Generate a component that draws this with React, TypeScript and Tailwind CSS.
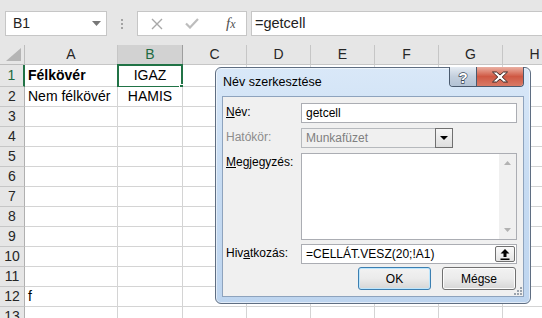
import React from 'react';

const COLS = ['A', 'B', 'C', 'D', 'E', 'F', 'G', 'H'];
const ROWS = [1, 2, 3, 4, 5, 6, 7, 8, 9, 10, 11, 12, 13];

const cellText: Record<string, { text: string; bold?: boolean; center?: boolean }> = {
  A1: { text: 'Félkövér', bold: true },
  B1: { text: 'IGAZ', center: true },
  A2: { text: 'Nem félkövér' },
  B2: { text: 'HAMIS', center: true },
  A12: { text: 'f' },
};

const FormulaBar = () => (
  <div className="flex h-[45px] items-start bg-[#e6e6e6] pl-[5px] pt-[11px]">
    <div className="flex h-[25px] w-[102px] items-center justify-between border border-[#c6c6c6] bg-white pl-[7px] pr-[5px] text-[14px] text-[#222]">
      <span>B1</span>
      <svg width="9" height="5" viewBox="0 0 9 5">
        <path d="M0 0h9L4.5 5z" fill="#777" />
      </svg>
    </div>
    <div className="flex h-[25px] w-[30px] flex-col items-center justify-center gap-[2px]">
      <div className="h-[2px] w-[2px] bg-[#a3a3a3]" />
      <div className="h-[2px] w-[2px] bg-[#a3a3a3]" />
      <div className="h-[2px] w-[2px] bg-[#a3a3a3]" />
    </div>
    <div className="flex h-[25px] w-[110px] items-center border border-[#c6c6c6] bg-white">
      <svg className="ml-[13px]" width="12" height="12" viewBox="0 0 12 12">
        <path d="M1 1l10 10M11 1L1 11" stroke="#a8a8a8" strokeWidth="1.4" fill="none" />
      </svg>
      <svg className="ml-[22px]" width="14" height="11" viewBox="0 0 14 11">
        <path d="M1 5.5l4 4L13 1" stroke="#bdbdbd" strokeWidth="2.2" fill="none" />
      </svg>
      <span className="ml-[27px] font-['Liberation_Serif',serif] text-[15px] italic text-[#505050]">
        f<span className="text-[12px]">x</span>
      </span>
    </div>
    <div className="ml-[4px] flex h-[25px] flex-1 items-center border border-r-0 border-[#c6c6c6] bg-white pl-[3px] text-[14.5px] text-[#222]">
      =getcell
    </div>
  </div>
);

const Grid = () => (
  <div className="grid grid-cols-[25px_93px_65px_64px_64px_64px_64px_64px_64px] grid-rows-[20px_22px_repeat(12,20px)] text-[14px]">
    <div className="relative border-b border-r border-[#bdbdbd] bg-[#e6e6e6]">
      <svg className="absolute bottom-[3px] right-[3px]" width="15" height="13" viewBox="0 0 15 13">
        <path d="M15 0v13H0z" fill="#b5b5b5" />
      </svg>
    </div>
    {COLS.map((c) => (
      <div
        key={c}
        className={`flex items-center justify-center border-b border-r ${
          c === 'B'
            ? 'border-[#9e9e9e] bg-[#d2d2d2] text-[#1e6b41]'
            : 'border-[#c6c6c6] bg-[#e6e6e6] text-[#262626]'
        }`}
      >
        {c}
      </div>
    ))}
    {ROWS.map((r) => (
      <React.Fragment key={r}>
        <div
          className={`flex items-center justify-center border-b bg-[#e6e6e6] ${
            r === 1
              ? 'border-r-2 border-b-[#c6c6c6] border-r-[#217346] text-[#1e6b41]'
              : 'border-r border-[#c6c6c6] border-r-[#b0b0b0] text-[#262626]'
          }`}
        >
          {r}
        </div>
        {COLS.map((c) => {
          const key = `${c}${r}`;
          const cell = cellText[key];
          return (
            <div
              key={key}
              className={`relative flex items-center border-b border-r border-[#d4d4d4] bg-white px-[3px] text-black ${
                cell?.center ? 'justify-center' : ''
              } ${cell?.bold ? 'font-bold' : ''}`}
            >
              {cell?.text}
              {key === 'B1' && (
                <div className="pointer-events-none absolute -left-[1px] -top-[1px] h-[24px] w-[66px] border-2 border-[#217346]">
                  <div className="absolute -bottom-[4px] -right-[4px] h-[6px] w-[6px] border border-white bg-[#217346]" />
                </div>
              )}
            </div>
          );
        })}
      </React.Fragment>
    ))}
  </div>
);

const Label = ({ children, disabled }: { children: React.ReactNode; disabled?: boolean }) => (
  <div className={`w-[75px] shrink-0 leading-[18px] ${disabled ? 'text-[#8c8c8c]' : 'text-black'}`}>{children}</div>
);

const NameDialog = () => (
  <div className="absolute left-[215px] top-[67px] h-[237px] w-[316px] rounded-[6px] border border-[#5f6e82] bg-gradient-to-b from-[#d9e8f8] via-[#c6dbf2] to-[#bed5ef] px-[6px] shadow-[inset_0_0_0_1px_rgba(255,255,255,0.55)]">
    <div className="flex h-[28px] items-center pl-[1px] text-[12.5px] text-black">Név szerkesztése</div>

    <div className="absolute -top-[1px] right-[6px] flex h-[20px] overflow-hidden rounded-b-[4px] border border-t-0 border-[#4a5a6e]">
      <div className="flex w-[27px] items-center justify-center border-r border-[#4a5a6e] bg-gradient-to-b from-[#e6ecf3] via-[#c3cfdd] to-[#b3c2d4]">
        <svg width="12" height="16" viewBox="0 0 12 16">
          <text
            x="6"
            y="13.5"
            textAnchor="middle"
            fontFamily="Liberation Sans, Arial, sans-serif"
            fontWeight="bold"
            fontSize="15"
            fill="#fff"
            stroke="#3a4654"
            strokeWidth="1.3"
            paintOrder="stroke"
          >
            ?
          </text>
        </svg>
      </div>
      <div className="flex w-[46px] items-center justify-center bg-gradient-to-b from-[#eab0a3] via-[#cf5843] to-[#d87a66]">
        <svg width="18" height="12" viewBox="0 0 18 12">
          <path
            d="M1.5 1h4l3.5 3 3.5-3h4l-5.3 5 5.3 5h-4L9 8 5.5 11h-4l5.3-5z"
            fill="#fff"
            stroke="#3b2a28"
            strokeWidth="1"
            strokeLinejoin="round"
          />
        </svg>
      </div>
    </div>

    <div className="relative flex h-[201px] flex-col border border-[#8ea3bd] bg-[#f0f0f0] pl-[3px] pr-[6px] pt-[6px] text-[12px]">
      <div className="flex">
        <Label>
          <span className="underline">N</span>év:
        </Label>
        <div className="flex h-[20px] w-[216px] items-center border border-[#abadb3] bg-white pl-[4px] text-black">
          getcell
        </div>
      </div>

      <div className="mt-[5px] flex">
        <Label disabled>Hatókör:</Label>
        <div className="flex h-[20px] w-[152px] items-center border border-[#b6b9bd] bg-[#f0f0f0]">
          <span className="flex-1 pl-[4px] text-[#7f7f7f]">Munkafüzet</span>
          <div className="-mr-[1px] -my-[1px] flex h-[20px] w-[18px] items-center justify-center border border-[#707070] bg-gradient-to-b from-[#f6f6f6] to-[#dedede]">
            <svg width="8" height="4" viewBox="0 0 8 4">
              <path d="M0 0h8L4 4z" fill="#000" />
            </svg>
          </div>
        </div>
      </div>

      <div className="mt-[5px] flex">
        <Label>
          <span className="underline">M</span>egjegyzés:
        </Label>
        <div className="flex h-[87px] w-[216px] border border-[#abadb3] bg-white">
          <div className="flex-1" />
          <div className="flex w-[17px] flex-col items-center justify-between bg-[#f0f0f0] py-[7px]">
            <svg width="7" height="4" viewBox="0 0 7 4">
              <path d="M3.5 0L7 4H0z" fill="#b2b2b2" />
            </svg>
            <svg width="7" height="4" viewBox="0 0 7 4">
              <path d="M0 0h7L3.5 4z" fill="#b2b2b2" />
            </svg>
          </div>
        </div>
      </div>

      <div className="mt-[4px] flex">
        <Label>
          Hiv<span className="underline">a</span>tkozás:
        </Label>
        <div className="flex h-[20px] w-[216px] items-center border border-[#abadb3] bg-white pl-[4px] pr-[1px] text-black">
          <span className="flex-1">=CELLÁT.VESZ(20;!A1)</span>
          <div className="flex h-[16px] w-[20px] items-center justify-center rounded-[2px] border border-[#707070] bg-gradient-to-b from-[#fafafa] to-[#e4e4e4]">
            <svg width="10" height="11" viewBox="0 0 10 11">
              <path d="M5 0L9.5 4.5H6.5V8h-3V4.5H0.5z" fill="#000" />
              <rect x="0.5" y="9.5" width="9" height="1.5" fill="#000" />
            </svg>
          </div>
        </div>
      </div>

      <div className="mt-[3px] flex justify-end gap-[11px] pr-[1px]">
        <button className="h-[23px] w-[73px] rounded-[3px] border border-[#3c7fb1] bg-gradient-to-b from-[#f2f2f2] via-[#ebebeb] to-[#d6d6d6] text-black shadow-[inset_0_0_0_1px_#bde6fd]">
          OK
        </button>
        <button className="h-[23px] w-[74px] rounded-[3px] border border-[#707070] bg-gradient-to-b from-[#f2f2f2] via-[#ebebeb] to-[#d6d6d6] text-black shadow-[inset_0_0_0_1px_#fcfcfc]">
          Mégse
        </button>
      </div>

      <svg className="absolute bottom-[1px] right-[1px]" width="10" height="10" viewBox="0 0 10 10">
        <g fill="#9aa3ad">
          <rect x="8" y="2" width="2" height="2" />
          <rect x="5" y="5" width="2" height="2" />
          <rect x="8" y="5" width="2" height="2" />
          <rect x="2" y="8" width="2" height="2" />
          <rect x="5" y="8" width="2" height="2" />
          <rect x="8" y="8" width="2" height="2" />
        </g>
      </svg>
    </div>
  </div>
);

export default function App() {
  return (
    <div className="relative h-[318px] w-[542px] overflow-hidden bg-white font-['Liberation_Sans',Arial,sans-serif]">
      <FormulaBar />
      <Grid />
      <NameDialog />
    </div>
  );
}
